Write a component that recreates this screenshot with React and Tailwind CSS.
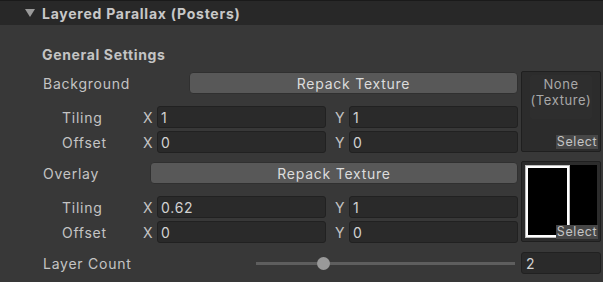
import React from "react";

const font = { fontFamily: "Inter, 'Noto Sans', sans-serif" };

function NumField({ value, className = "" }) {
  return (
    <div
      className={
        "h-[22px] rounded-[3px] bg-[#2a2a2a] border border-[#212121] flex items-center pl-[3px] text-[14px] tracking-[0.75px] text-[#d2d2d2] " +
        className
      }
    >
      {value}
    </div>
  );
}

function VectorRow({ label, x, y }) {
  return (
    <div className="flex h-[22px] items-center text-[14px] tracking-[0.75px] text-[#c4c4c4]">
      <div className="w-[100px] pl-[19px]">{label}</div>
      <div className="w-[14px]">X</div>
      <NumField value={x} className="w-[169px]" />
      <div className="w-[9px]" />
      <div className="w-[14px]">Y</div>
      <NumField value={y} className="w-[169px]" />
    </div>
  );
}

function SelectBadge() {
  return (
    <div className="absolute right-[2px] bottom-[2px] w-[42px] h-[14px] bg-[#474747] text-[12.5px] leading-[14px] tracking-[0.6px] text-[#c4c4c4] text-center">
      Select
    </div>
  );
}

function TextureNone() {
  return (
    <div className="relative w-[80px] h-[81px] bg-[#2c2c2c] border border-[#1f1f1f] rounded-[2px]">
      <div className="mx-[8px] mt-[3px] h-[44px] bg-[#2e2e2e] rounded-[2px] flex flex-col items-center pt-[1px] text-[13px] leading-[16px] tracking-[0.6px] text-[#a8a8a8]">
        <span>None</span>
        <span>(Texture)</span>
      </div>
      <SelectBadge />
    </div>
  );
}

function TexturePreview() {
  return (
    <div className="relative w-[80px] h-[81px] bg-[#2c2c2c] border border-[#1f1f1f] rounded-[2px] p-[3px]">
      <svg width="72" height="73" viewBox="0 0 72 73" className="block">
        <rect x="0" y="0" width="72" height="73" fill="#000" />
        <rect x="1.5" y="1.5" width="42" height="70" fill="none" stroke="#bdbdbd" strokeWidth="3" />
        <rect x="2" y="2" width="41" height="69" fill="none" stroke="#ffffff" strokeWidth="2" />
      </svg>
      <SelectBadge />
    </div>
  );
}

function TextureSection({ label, buttonWidth, x, y, preview }) {
  return (
    <div className="flex gap-[3px]">
      <div className="w-[475px] flex flex-col">
        <div className="mt-[1px] flex h-[22px] items-center">
          <div className="text-[14px] tracking-[0.75px] text-[#c4c4c4]">{label}</div>
          <button
            className="ml-auto h-[22px] rounded-[4px] bg-[#585858] border border-[#303030] text-[14px] tracking-[0.75px] text-[#dcdcdc] flex items-center justify-center"
            style={{ width: buttonWidth }}
          >
            Repack Texture
          </button>
        </div>
        <div className="mt-[12px]">
          <VectorRow label="Tiling" x={x.t} y={y.t} />
        </div>
        <div className="mt-[3px]">
          <VectorRow label="Offset" x={x.o} y={y.o} />
        </div>
      </div>
      {preview ? <TexturePreview /> : <TextureNone />}
    </div>
  );
}

export default function App() {
  return (
    <div className="w-[603px] h-[282px] bg-[#383838] overflow-hidden" style={font}>
      <div className="h-[25px] bg-[#282828] border-t border-[#1a1a1a] flex items-center">
        <svg width="10" height="8" viewBox="0 0 10 8" className="ml-[25px] mt-[-1px]">
          <polygon points="0,0 10,0 5,8" fill="#9a9a9a" />
        </svg>
        <span className="ml-[7px] text-[14px] font-bold tracking-[0.75px] text-[#c8c8c8]">
          Layered Parallax (Posters)
        </span>
      </div>
      <div className="pl-[43px] pr-[2px]">
        <div className="mt-[19px] h-[20px] flex items-center text-[14px] font-bold tracking-[0.65px] text-[#c4c4c4] -ml-[1px]">
          General Settings
        </div>
        <div className="mt-[7px]">
          <TextureSection
            label="Background"
            buttonWidth={329}
            x={{ t: "1", o: "0" }}
            y={{ t: "1", o: "0" }}
          />
        </div>
        <div className="mt-[8px]">
          <TextureSection
            label="Overlay"
            buttonWidth={368}
            x={{ t: "0.62", o: "0" }}
            y={{ t: "1", o: "0" }}
            preview
          />
        </div>
        <div className="mt-[9px] flex h-[22px] items-center">
          <div className="w-[213px] text-[14px] tracking-[0.75px] text-[#c4c4c4]">Layer Count</div>
          <div className="relative w-[259px] h-[22px] flex items-center">
            <div className="w-full h-[3px] bg-[#5e5e5e]" />
            <div className="absolute left-[61px] top-[5px] w-[13px] h-[13px] rounded-full bg-[#999999]" />
          </div>
          <div className="ml-[6px]">
            <NumField value="2" className="w-[80px] pl-[4px]" />
          </div>
        </div>
      </div>
    </div>
  );
}
